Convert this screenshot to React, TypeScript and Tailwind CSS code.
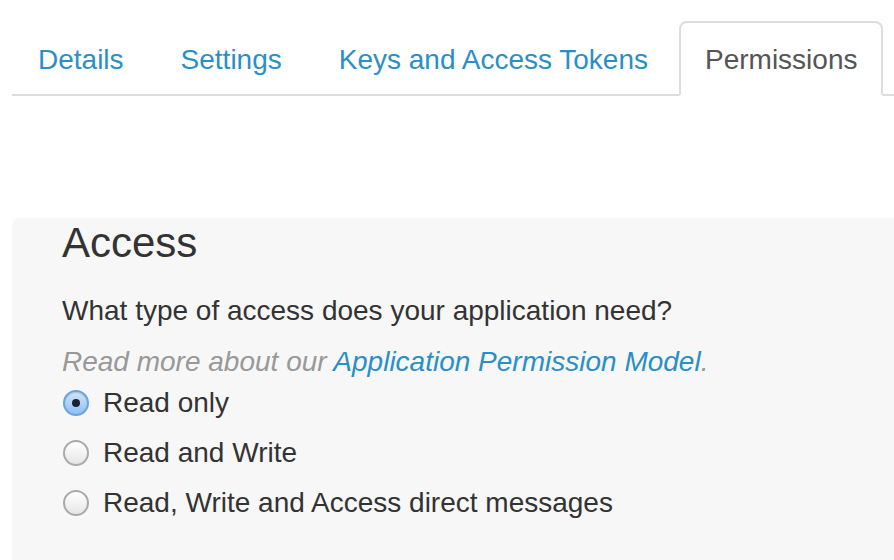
import React from "react";

const tabs = ["Details", "Settings", "Keys and Access Tokens", "Permissions"];

const options = [
  { label: "Read only", checked: true },
  { label: "Read and Write", checked: false },
  { label: "Read, Write and Access direct messages", checked: false },
];

function Radio({ checked }: { checked: boolean }) {
  if (checked) {
    return (
      <span className="flex h-[26px] w-[26px] shrink-0 items-center justify-center rounded-full border-2 border-[#6aa4e0] bg-gradient-to-b from-[#cfe4fb] to-[#8fc0f3] shadow-[inset_0_1px_1px_rgba(0,0,0,0.15)]">
        <span className="h-[8px] w-[8px] rounded-full bg-[#1a2233]" />
      </span>
    );
  }
  return (
    <span className="h-[26px] w-[26px] shrink-0 rounded-full border-2 border-[#aaaaaa] bg-gradient-to-b from-[#ffffff] to-[#e6e6e6]" />
  );
}

export default function App() {
  return (
    <div
      className="h-[560px] w-[894px] overflow-hidden bg-white"
      style={{ fontFamily: '"Liberation Sans", Arial, sans-serif' }}
    >
      {/* Tabs */}
      <div className="ml-[12px] flex border-b-2 border-[#dddddd] pt-[21px]">
        {tabs.map((t) => {
          const active = t === "Permissions";
          return (
            <div
              key={t}
              className={
                active
                  ? "mr-[5px] -mb-[2px] rounded-t-[8px] border-2 border-[#dddddd] border-b-transparent bg-white px-[24px] pt-[20px] pb-[17px] text-[28px] leading-[34px] text-[#555555]"
                  : "mr-[5px] -mb-[2px] rounded-t-[8px] border-2 border-transparent px-[24px] pt-[20px] pb-[17px] text-[28px] leading-[34px] text-[#2b8fc7]"
              }
            >
              {t}
            </div>
          );
        })}
      </div>

      {/* Panel */}
      <div className="ml-[12px] mt-[122px] h-[400px] rounded-tl-[8px] bg-[#f7f7f7] pl-[50px] pt-[2px]">
        <h2 className="text-[42px] leading-[46px] text-[#333333]">Access</h2>
        <p className="mt-[25px] text-[28px] leading-[40px] text-[#333333]">
          What type of access does your application need?
        </p>
        <p className="mt-[11px] text-[28px] italic leading-[40px] text-[#999999]">
          Read more about our{" "}
          <span className="text-[#2b8fc7]">Application Permission Model</span>.
        </p>
        <div className="mt-[1px] flex flex-col gap-[10px]">
          {options.map((o) => (
            <label key={o.label} className="flex h-[40px] items-center gap-[14px] pl-[1px]">
              <Radio checked={o.checked} />
              <span className="text-[28px] leading-[40px] text-[#333333]">{o.label}</span>
            </label>
          ))}
        </div>
      </div>
    </div>
  );
}
